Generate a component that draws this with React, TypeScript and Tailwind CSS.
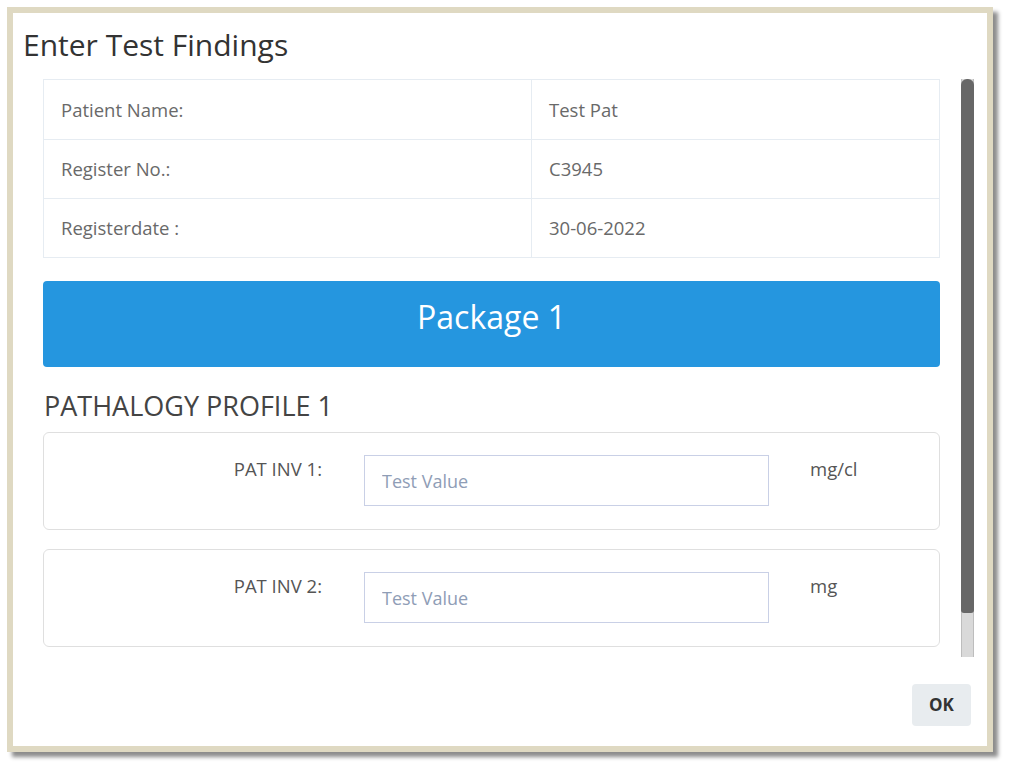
import React from 'react'

const patientRows = [
  { label: 'Patient Name:', value: 'Test Pat' },
  { label: 'Register No.:', value: 'C3945' },
  { label: 'Registerdate :', value: '30-06-2022' }
]

const investigations = [
  { name: 'PAT INV 1:', unit: 'mg/cl' },
  { name: 'PAT INV 2:', unit: 'mg' }
]

export default function App() {
  return (
    <div className="w-full h-[767px] bg-white pt-[7px] pl-[7px] font-['Open_Sans',sans-serif]">
      {/* Dialog frame */}
      <div className="w-[986px] h-[745px] border-[6px] border-[#dfd9c2] bg-white shadow-[5px_5px_4px_rgba(0,0,0,0.45)] flex flex-col">
        <div className="h-[66px] pl-[10px] flex items-center">
          <h2 className="text-[30px] text-[#333] leading-none pb-[2px]">Enter Test Findings</h2>
        </div>

        <div className="flex h-[578px]">
          {/* Scrollable content */}
          <div className="ml-[30px] w-[897px] flex flex-col overflow-hidden">
            <div className="border border-[#e6ecf2]">
              {patientRows.map((row, i) => (
                <div key={row.label} className={`flex h-[59px] ${i > 0 ? 'border-t border-[#e6ecf2]' : ''}`}>
                  <div className="w-[488px] border-r border-[#e6ecf2] pl-[17px] flex items-center text-[18.5px] text-[#696969]">
                    {row.label}
                  </div>
                  <div className="flex-1 pl-[17px] flex items-center text-[18.5px] text-[#696969]">{row.value}</div>
                </div>
              ))}
            </div>

            <button className="mt-[23px] h-[86px] w-full rounded-[4px] bg-[#2596df] text-white text-[32px] pb-[14px]">
              Package 1
            </button>

            <h3 className="mt-[25px] pl-[1px] text-[27px] leading-none text-[#444]">PATHALOGY PROFILE 1</h3>

            <div className="mt-[13px] flex flex-col gap-[19px]">
              {investigations.map((inv) => (
                <div key={inv.name} className="h-[98px] border border-[#dfdfdf] rounded-[6px] flex items-start pt-[22px]">
                  <div className="w-[278px] text-right text-[18.5px] text-[#555]">{inv.name}</div>
                  <input
                    className="ml-[42px] w-[405px] h-[51px] border border-[#c9d0e6] px-[17px] text-[18px] text-[#555] placeholder:text-[#8f9db6] outline-none"
                    placeholder="Test Value"
                  />
                  <div className="ml-[41px] text-[18.5px] text-[#555]">{inv.unit}</div>
                </div>
              ))}
            </div>
          </div>

          {/* Scrollbar */}
          <div className="ml-[21px] w-[13px] h-full flex flex-col bg-[#d9d9d9] border-x border-[#bdbdbd]">
            <div className="h-[534px] bg-[#676767] rounded-t-[6px] rounded-b-[3px] -mx-px"></div>
          </div>
        </div>

        <div className="flex-1 flex justify-end items-start pt-[27px] pr-[16px]">
          <button className="w-[59px] h-[42px] rounded-[4px] bg-[#e8ecef] text-[17px] font-bold text-[#333]">OK</button>
        </div>
      </div>
    </div>
  )
}
